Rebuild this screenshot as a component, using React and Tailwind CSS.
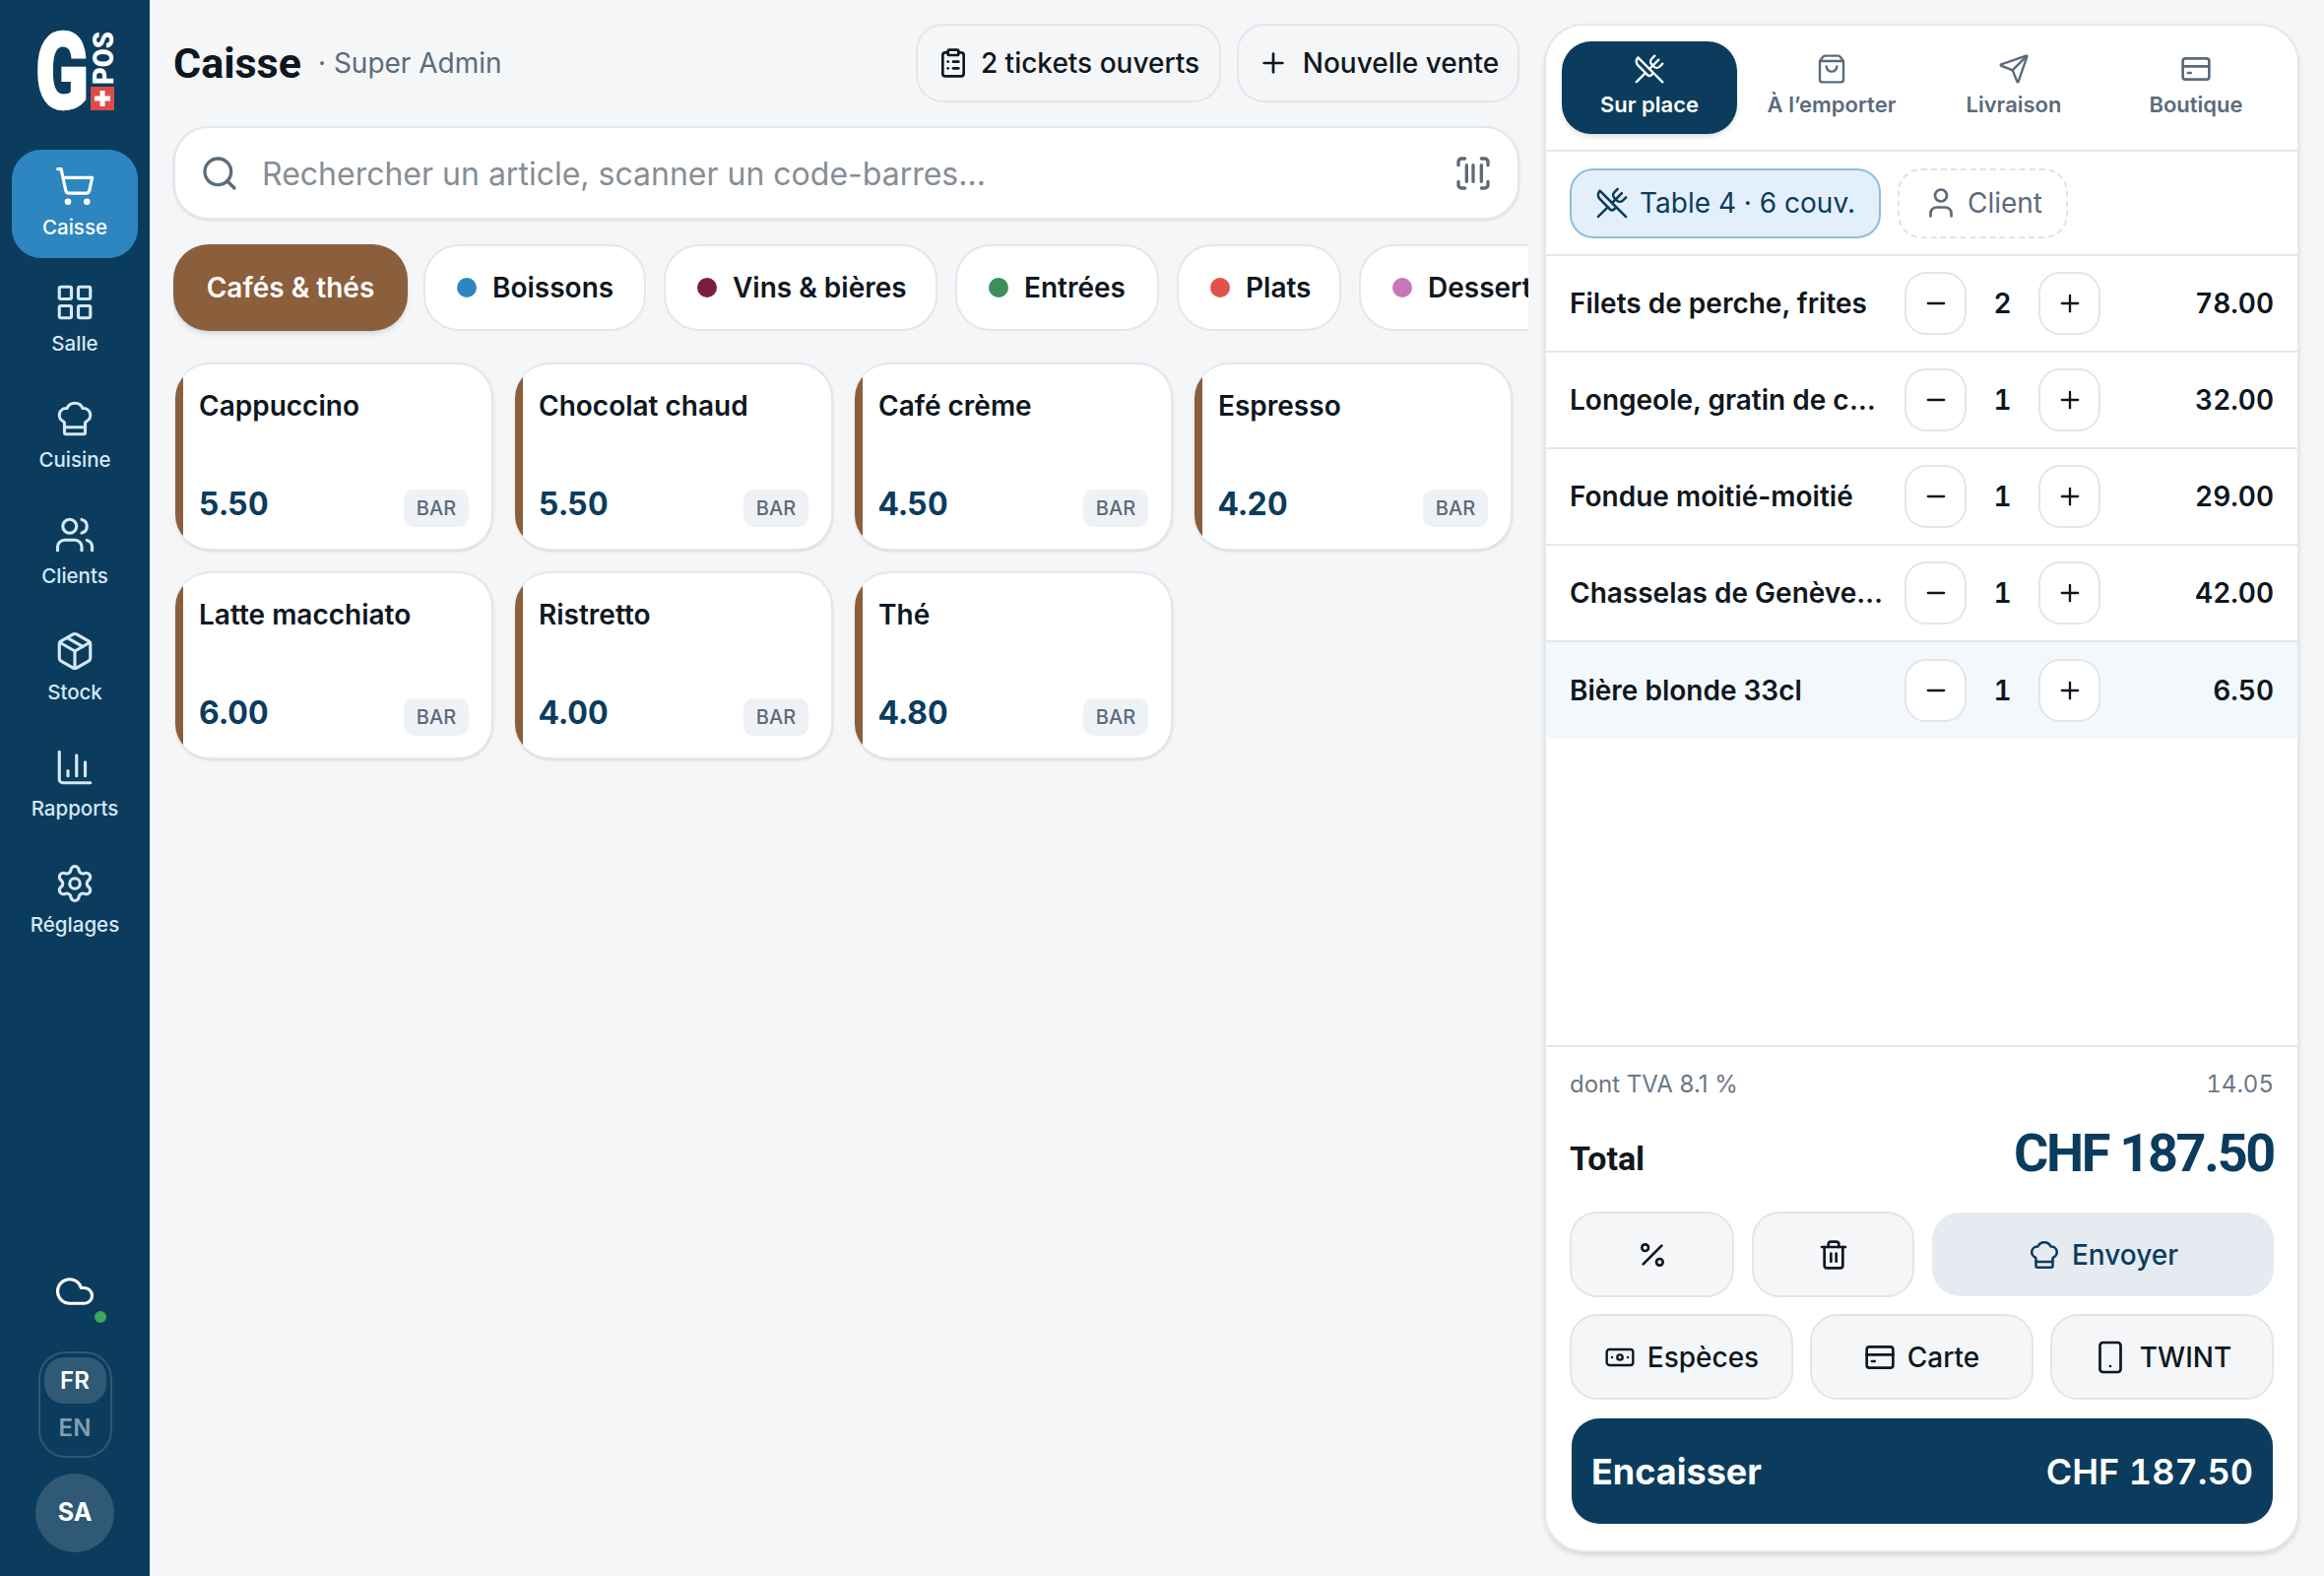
import React from "react";
import {
  ShoppingCart, LayoutGrid, ChefHat, Users, Package, ChartColumn, Settings, Cloud,
  ClipboardList, Plus, Minus, Search, ScanBarcode, UtensilsCrossed, ShoppingBag, Send,
  User, Percent, Trash2, Banknote, Smartphone,
} from "lucide-react";

const navItems = [
  { label: "Caisse", icon: ShoppingCart, active: true },
  { label: "Salle", icon: LayoutGrid },
  { label: "Cuisine", icon: ChefHat },
  { label: "Clients", icon: Users },
  { label: "Stock", icon: Package },
  { label: "Rapports", icon: ChartColumn },
  { label: "Réglages", icon: Settings },
];

const categories = [
  { label: "Boissons", dot: "bg-[#2e86c1]", width: "w-[226px]" },
  { label: "Vins & bières", dot: "bg-[#7b1e3a]", width: "w-[278px]" },
  { label: "Entrées", dot: "bg-[#3d8f5a]", width: "w-[207px]" },
  { label: "Plats", dot: "bg-[#e0524a]", width: "w-[167px]" },
  { label: "Desserts", dot: "bg-[#c678b9]", width: "w-[230px]" },
];

const produits = [
  { nom: "Cappuccino", prix: "5.50" },
  { nom: "Chocolat chaud", prix: "5.50" },
  { nom: "Café crème", prix: "4.50" },
  { nom: "Espresso", prix: "4.20" },
  { nom: "Latte macchiato", prix: "6.00" },
  { nom: "Ristretto", prix: "4.00" },
  { nom: "Thé", prix: "4.80" },
];

const lignes = [
  { nom: "Filets de perche, frites", qte: 2, prix: "78.00" },
  { nom: "Longeole, gratin de cardons", qte: 1, prix: "32.00" },
  { nom: "Fondue moitié-moitié", qte: 1, prix: "29.00" },
  { nom: "Chasselas de Genève AOC", qte: 1, prix: "42.00" },
  { nom: "Bière blonde 33cl", qte: 1, prix: "6.50", active: true },
];

const CardIcon = ({ size = 24, className = "" }) => (
  <svg width={size} height={size} viewBox="0 0 24 24" fill="none" stroke="currentColor" strokeWidth="2" strokeLinecap="round" strokeLinejoin="round" className={className}>
    <rect width="20" height="16" x="2" y="4" rx="2" />
    <path d="M2 10h20" />
    <path d="M6 15h2" />
  </svg>
);

const Logo = () => (
  <svg width="84" height="84" viewBox="0 0 84 84" className="mb-[38px] overflow-visible">
    <text x="2" y="80" fill="#fff" stroke="#fff" strokeWidth="2.5" fontFamily="Roboto" fontWeight="900" fontSize="108" textLength="54" lengthAdjust="spacingAndGlyphs">G</text>
    <text transform="translate(81 56) rotate(-90)" x="0" y="0" fill="#fff" fontFamily="Roboto" fontWeight="900" fontSize="30" textLength="54" lengthAdjust="spacingAndGlyphs">POS</text>
    <rect x="58" y="58" width="24" height="24" fill="#dd4b48" />
    <path d="M70 62v16M62 70h16" stroke="#fff" strokeWidth="5" />
  </svg>
);

const Sidebar = () => (
  <aside className="w-[152px] h-full shrink-0 bg-[#0b3c5d] flex flex-col items-center pt-[30px] pb-6">
    <Logo />
    <nav className="w-[128px] flex flex-col gap-2">
      {navItems.map(({ label, icon: Icon, active }) => (
        <div
          key={label}
          className={`h-[110px] rounded-[30px] flex flex-col items-center justify-center gap-[6px] text-[20.5px] font-medium ${active ? "bg-[#2e86c1] text-white" : "text-[#d6e7f5]"}`}
        >
          <Icon size={42} strokeWidth={1.8} />
          <span>{label}</span>
        </div>
      ))}
    </nav>
    <div className="mt-auto relative w-[42px] h-[42px] mb-[40px] text-white">
      <Cloud size={42} strokeWidth={1.8} />
      <span className="absolute left-[41px] top-[41px] w-3 h-3 rounded-full bg-[#3aa85f]" />
    </div>
    <div className="w-[75px] h-[108px] rounded-[28px] border-2 border-white/15 p-1 flex flex-col items-center text-[24px] font-semibold mb-4">
      <span className="w-full h-[47px] rounded-[20px] bg-white/15 text-white flex items-center justify-center">FR</span>
      <span className="h-[49px] text-white/50 flex items-center justify-center">EN</span>
    </div>
    <div className="w-20 h-20 rounded-full bg-white/15 text-white text-[25px] font-bold flex items-center justify-center">SA</div>
  </aside>
);

const Header = () => (
  <header className="flex items-center h-[80px]">
    <h1 className="font-['Roboto',sans-serif] font-bold text-[43px] leading-none text-[#0f1720]">Caisse</h1>
    <span className="ml-[17px] text-[28px] text-[#5b6b7b]">· Super Admin</span>
    <button className="ml-auto h-[80px] w-[310px] rounded-[28px] border-2 border-[#e2e6ea] flex items-center justify-center gap-[12px] text-[28px] font-medium text-[#0f1720]">
      <ClipboardList size={32} strokeWidth={2} />
      2 tickets ouverts
    </button>
    <button className="ml-4 h-[80px] w-[287px] rounded-[28px] border-2 border-[#e2e6ea] flex items-center justify-center gap-[14px] text-[28px] font-medium text-[#0f1720]">
      <Plus size={32} strokeWidth={2} />
      Nouvelle vente
    </button>
  </header>
);

const SearchBar = () => (
  <div className="mt-[24px] h-[95px] rounded-[36px] bg-white border-2 border-[#e2e8ee] shadow-sm flex items-center pl-[25px] pr-[25px]">
    <Search size={40} strokeWidth={2} className="text-[#5b6b7b] shrink-0" />
    <span className="ml-[23px] pt-[2px] text-[32px] text-[#868e96] flex-1">Rechercher un article, scanner un code-barres...</span>
    <ScanBarcode size={40} strokeWidth={2} className="text-[#5b6b7b] shrink-0" />
  </div>
);

const Categories = () => (
  <div className="mt-[25px] -mr-[9px] h-[96px] flex gap-[18px] overflow-hidden text-[28px] font-semibold">
    <div className="w-[238px] h-[88px] -mr-[2px] shrink-0 rounded-[36px] bg-[#8b5e3c] text-white shadow-md flex items-center justify-center">Cafés & thés</div>
    {categories.map((c) => (
      <div key={c.label} className={`${c.width} h-[88px] shrink-0 rounded-[36px] bg-white border-2 border-[#e2e8ee] text-[#0f1720] flex items-center pl-[32px] gap-4 whitespace-nowrap`}>
        <span className={`w-5 h-5 rounded-full shrink-0 ${c.dot}`} />
        {c.label}
      </div>
    ))}
  </div>
);

const ProductCard = ({ nom, prix }) => (
  <div className="relative overflow-hidden h-[191px] rounded-[36px] bg-white border-y-2 border-r-2 border-[#e2e8ee] shadow-sm pl-6 pr-[23px] pt-[23px] pb-[22px] flex flex-col justify-between">
    <span className="absolute left-0 inset-y-0 w-2 bg-[#8b5e3c]" />
    <span className="text-[28px] font-semibold leading-[38px] text-[#0f1720]">{nom}</span>
    <div className="flex items-end justify-between">
      <span className="text-[32px] font-bold leading-[44px] tabular-nums text-[#0b3c5d] mb-px">{prix}</span>
      <span className="w-[66px] h-[38px] rounded-[10px] bg-[#eef1f5] text-[#5b6b7b] text-[20px] font-medium flex items-center justify-center">BAR</span>
    </div>
  </div>
);

const OrderTabs = () => {
  const tabs = [
    { label: "Sur place", icon: UtensilsCrossed, active: true },
    { label: "À l’emporter", icon: ShoppingBag },
    { label: "Livraison", icon: Send },
    { label: "Boutique", icon: CardIcon },
  ];
  return (
    <div className="h-[128px] shrink-0 border-b-2 border-[#e2e8ee] flex gap-[7px] pl-4 pt-4">
      {tabs.map(({ label, icon: Icon, active }) => (
        <div
          key={label}
          className={`w-[178px] h-[94px] rounded-[30px] flex flex-col items-center justify-center gap-[4px] pb-[2px] text-[22px] font-semibold ${active ? "bg-[#0b3c5d] text-white shadow-md" : "text-[#5b6b7b]"}`}
        >
          <Icon size={32} strokeWidth={1.8} />
          <span className="whitespace-nowrap">{label}</span>
        </div>
      ))}
    </div>
  );
};

const OrderRow = ({ nom, qte, prix, active }) => (
  <div className={`h-[98px] shrink-0 flex items-center pl-6 pr-6 text-[#0f1720] text-[28px] font-semibold ${active ? "bg-[#f3f8fc]" : "border-b-2 border-[#e2e8ee]"}`}>
    <span className="w-[322px] truncate shrink-0">{nom}</span>
    <button className="ml-[18px] w-[63px] h-[64px] shrink-0 rounded-[22px] border-2 border-[#e2e6ea] bg-white flex items-center justify-center">
      <Minus size={28} strokeWidth={2} />
    </button>
    <span className="w-[73px] text-center shrink-0 tabular-nums">{qte}</span>
    <button className="w-[63px] h-[64px] shrink-0 rounded-[22px] border-2 border-[#e2e6ea] bg-white flex items-center justify-center">
      <Plus size={28} strokeWidth={2} />
    </button>
    <span className="flex-1 text-right tabular-nums">{prix}</span>
  </div>
);

const ticketBtn = "rounded-[28px] border-2 border-[#e2e6ea] bg-[#f4f6f8] text-[#0f1720] flex items-center justify-center";

const OrderPanel = () => (
  <section className="w-[767px] my-6 mr-[25px] shrink-0 rounded-[40px] bg-white border-2 border-[#e2e8ee] shadow-md flex flex-col overflow-hidden">
    <OrderTabs />
    <div className="h-[106px] shrink-0 border-b-2 border-[#e2e8ee] flex items-center gap-[17px] pl-6">
      <div className="w-[316px] h-[71px] rounded-[24px] border-2 border-[#8fbcdc] bg-[#e3effa] text-[#0b3c5d] text-[28px] flex items-center justify-center gap-[11px]">
        <UtensilsCrossed size={34} strokeWidth={1.8} />
        Table 4 · 6 couv.
      </div>
      <div className="w-[173px] h-[71px] rounded-[24px] border-2 border-dashed border-[#dfe3e8] text-[#5b6b7b] text-[28px] flex items-center justify-center gap-[9px]">
        <User size={36} strokeWidth={1.8} />
        Client
      </div>
    </div>
    <div className="flex-1 flex flex-col min-h-0">
      {lignes.map((l) => (
        <OrderRow key={l.nom} {...l} />
      ))}
    </div>
    <div className="shrink-0 border-t-2 border-[#e2e8ee] px-6 pt-[22px] pb-[27px]">
      <div className="flex justify-between text-[24px] leading-[32px] text-[#6b7785]">
        <span>dont TVA 8.1 %</span>
        <span className="tabular-nums">14.05</span>
      </div>
      <div className="mt-[15px] h-[66px] flex items-end justify-between font-['Roboto',sans-serif] font-bold">
        <span className="text-[34px] leading-[44px] text-[#0f1720]">Total</span>
        <span className="text-[54px] leading-[54px] tracking-[-2.3px] text-[#0b3c5d]">CHF 187.50</span>
      </div>
      <div className="mt-[32px] flex gap-[18px]">
        <button className={`${ticketBtn} w-[167px] h-[87px]`}><Percent size={32} strokeWidth={2} /></button>
        <button className={`${ticketBtn} w-[165px] h-[87px]`}><Trash2 size={32} strokeWidth={2} /></button>
        <button className="flex-1 h-[85px] mt-px rounded-[28px] bg-[#e6ebf2] text-[#0b3c5d] text-[28px] font-medium flex items-center justify-center gap-[11px]">
          <ChefHat size={34} strokeWidth={1.8} />
          Envoyer
        </button>
      </div>
      <div className="mt-[17px] flex gap-[17px] text-[28px] font-medium">
        <button className={`${ticketBtn} flex-1 h-[87px] gap-[12px]`}><Banknote size={32} strokeWidth={1.8} />Espèces</button>
        <button className={`${ticketBtn} flex-1 h-[87px] gap-[12px]`}><CardIcon size={32} />Carte</button>
        <button className={`${ticketBtn} flex-1 h-[87px] gap-[12px]`}><Smartphone size={36} strokeWidth={1.8} />TWINT</button>
      </div>
      <button className="mt-[19px] w-[712px] ml-[2px] h-[107px] rounded-[28px] bg-[#0b3c5d] text-white font-bold flex items-center justify-between px-5">
        <span className="text-[36px]">Encaisser</span>
        <span className="text-[36px] font-semibold tabular-nums">CHF 187.50</span>
      </button>
    </div>
  </section>
);

const App = () => (
  <div className="w-full h-screen bg-[#f4f6f8] font-['Inter',sans-serif] flex overflow-hidden">
    <Sidebar />
    <main className="flex-1 min-w-0 pl-6 pr-[25px] pt-6">
      <Header />
      <SearchBar />
      <Categories />
      <div className="mt-[24px] ml-[2px] grid grid-cols-[repeat(4,323px)] gap-x-[22px] gap-y-[21px]">
        {produits.map((p) => (
          <ProductCard key={p.nom} {...p} />
        ))}
      </div>
    </main>
    <OrderPanel />
  </div>
);

export default App;
